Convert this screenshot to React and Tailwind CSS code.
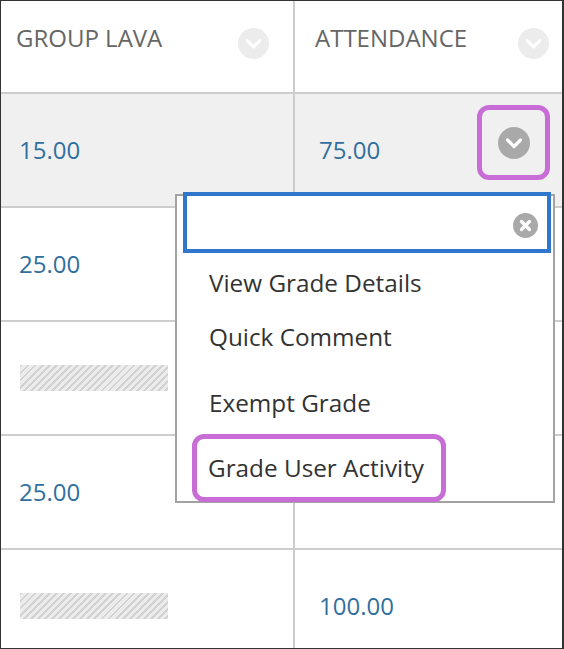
function Chevron({ fill, size = 32 }) {
  return (
    <svg width={size} height={size} viewBox="0 0 32 32" className="shrink-0">
      <circle cx="16" cy="16" r="16" fill={fill} />
      <path
        d="M9.5 13 L16 19.5 L22.5 13"
        fill="none"
        stroke="#fff"
        strokeWidth="3.2"
        strokeLinecap="round"
        strokeLinejoin="round"
      />
    </svg>
  )
}

function ClearIcon() {
  return (
    <svg width="25" height="25" viewBox="0 0 25 25">
      <circle cx="12.5" cy="12.5" r="12.5" fill="#a9a9a9" />
      <path
        d="M8.5 8.5 L16.5 16.5 M16.5 8.5 L8.5 16.5"
        stroke="#fff"
        strokeWidth="3.2"
        strokeLinecap="round"
      />
    </svg>
  )
}

function Hatch() {
  return (
    <div className="w-[148px] h-[26px] bg-[repeating-linear-gradient(135deg,#d2d2d2_0px,#d2d2d2_2px,#ececec_2px,#ececec_5px)]" />
  )
}

const rows = [
  { a: '15.00', b: '75.00', active: true },
  { a: '25.00', b: '' },
  { a: null, b: '' },
  { a: '25.00', b: '' },
  { a: null, b: '100.00' },
]

export default function App() {
  return (
    <div
      className="relative w-[564px] h-[649px] overflow-hidden bg-white border-l border-t border-b border-r-2 border-[#333]"
      style={{ fontFamily: '"Open Sans", "Noto Sans", sans-serif' }}
    >
      {/* header */}
      <div className="flex h-[93px] border-b-2 border-[#cdcdcd]">
        <div className="w-[294px] border-r-2 border-[#cdcdcd] flex items-start justify-between pt-[21px] pl-[15px] pr-[24px]">
          <span className="text-[24px] leading-[32px] text-[#666]">GROUP LAVA</span>
          <div className="mt-[6px]">
            <Chevron fill="#ececec" size={31} />
          </div>
        </div>
        <div className="flex-1 flex items-start justify-between pt-[21px] pl-[20px] pr-[13px]">
          <span className="text-[24px] leading-[32px] text-[#666]">ATTENDANCE</span>
          <div className="mt-[6px]">
            <Chevron fill="#ececec" size={31} />
          </div>
        </div>
      </div>

      {rows.map((r, i) => (
        <div
          key={i}
          className={`flex h-[114px] border-b-2 border-[#cdcdcd] ${r.active ? 'bg-[#f0f0f0]' : ''}`}
        >
          <div className="w-[294px] border-r-2 border-[#cdcdcd] flex items-center pl-[18px]">
            {r.a ? (
              <span className="text-[24px] leading-[32px] text-[#31709e]">{r.a}</span>
            ) : (
              <div className="pl-[1px]">
                <Hatch />
              </div>
            )}
          </div>
          <div className="flex-1 flex items-center justify-between pl-[24px] pr-[12px]">
            <span className="text-[24px] leading-[32px] text-[#31709e]">{r.b}</span>
            {r.active && (
              <div className="self-start mt-[11px] w-[73px] h-[75px] border-[5px] border-[#c86dd6] rounded-[12px] flex items-center justify-center">
                <Chevron fill="#a9a9a9" />
              </div>
            )}
          </div>
        </div>
      ))}

      {/* dropdown menu */}
      <div className="absolute left-[174px] top-[193px] w-[380px] h-[309px] bg-white border-2 border-[#a3a3a3] text-[24.3px] leading-[32px] text-[#333]">
        <div className="ml-[6px] mt-[-4px] w-[368px] h-[61px] bg-white border-4 border-[#2f77cc] flex items-center justify-end pr-[9px] pt-[6px]">
          <ClearIcon />
        </div>
        <div className="mt-[14px] pl-[32px]">View Grade Details</div>
        <div className="mt-[22px] pl-[32px]">Quick Comment</div>
        <div className="mt-[34px] pl-[32px]">Exempt Grade</div>
        <div className="mt-[15px] ml-[15px] w-[254px] border-[5px] border-[#c86dd6] rounded-[12px] pt-[13px] pb-[13px] pl-[11px]">
          Grade User Activity
        </div>
      </div>
    </div>
  )
}
